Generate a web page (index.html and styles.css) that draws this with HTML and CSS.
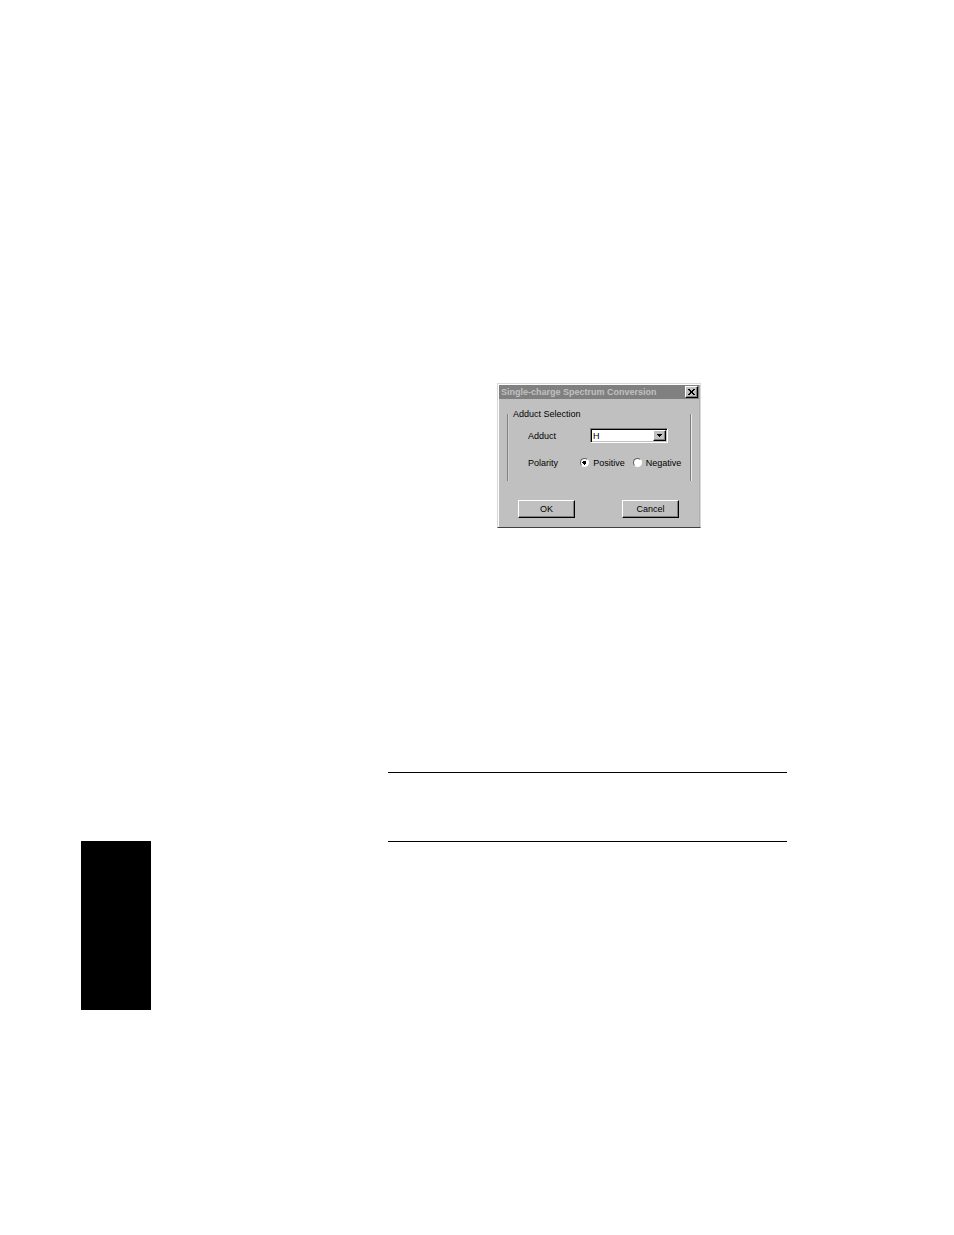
FILE: index.html
```
<!DOCTYPE html>
<html lang="en">
<head>
    <meta charset="UTF-8">
    <meta name="viewport" content="width=device-width, initial-scale=1.0">
    <title>Single-charge Spectrum Conversion</title>
    <link rel="stylesheet" href="styles.css">
</head>
<body>
    <div class="page">
        <aside class="chapter-tab"></aside>
        <main class="content">
            <form class="dialog">
                <header class="title-bar">
                    <h1>Single-charge Spectrum Conversion</h1>
                    <button type="button" class="close-btn" aria-label="Close">
                        <svg width="7" height="6" viewBox="0 0 7 6" shape-rendering="crispEdges">
                            <path d="M0 0h2v1h1v1h1v-1h1v-1h2v1h-1v1h-1v2h1v1h1v1h-2v-1h-1v-1h-1v1h-1v1h-2v-1h1v-1h1v-2h-1v-1h-1z"/>
                        </svg>
                    </button>
                </header>
                <fieldset class="group">
                    <legend>Adduct Selection</legend>
                    <div class="row">
                        <label class="name" for="adduct">Adduct</label>
                        <div class="combo">
                            <select id="adduct">
                                <option>H</option>
                            </select>
                            <span class="combo-arrow">
                                <svg width="5" height="3" viewBox="0 0 5 3" shape-rendering="crispEdges">
                                    <path d="M0 0h5v1h-1v1h-1v1h-1v-1h-1v-1h-1z"/>
                                </svg>
                            </span>
                        </div>
                    </div>
                    <div class="row" role="radiogroup" aria-label="Polarity">
                        <span class="name">Polarity</span>
                        <label class="option"><input type="radio" name="polarity" checked>Positive</label>
                        <label class="option"><input type="radio" name="polarity">Negative</label>
                    </div>
                </fieldset>
                <div class="buttons">
                    <button type="button" class="btn">OK</button>
                    <button type="button" class="btn">Cancel</button>
                </div>
            </form>
            <section class="note"></section>
        </main>
    </div>
</body>
</html>
```
FILE: styles.css
```
* {
    box-sizing: border-box;
}
body {
    margin: 0;
    background: #fff;
    color: #000;
    font-family: "Liberation Sans", Arial, sans-serif;
    font-size: 9px;
    line-height: 12px;
}
.page {
    display: grid;
    grid-template-columns: 70px 1fr;
    column-gap: 237px;
    align-items: start;
    min-height: 100vh;
    padding: 0 167px 0 81px;
}
.chapter-tab {
    height: 169px;
    margin-top: 841px;
    background: #000;
}
.content {
    padding-top: 383px;
}

/* dialog window */
.dialog {
    width: 204px;
    margin-left: 109px;
    padding: 1px 1px 9px;
    background: #c0c0c0;
    border: 1px solid #d8d8d8;
    border-bottom-color: #404040;
    box-shadow: inset 1px 1px #fff, inset -1px 0 #b0b0b0;
}
.title-bar {
    display: flex;
    align-items: center;
    justify-content: space-between;
    height: 14px;
    padding: 0 1px 0 2px;
    background: #808080;
}
.title-bar h1 {
    margin: 0;
    color: #c0c0c0;
    font-size: 9px;
    white-space: nowrap;
}
button {
    display: flex;
    align-items: center;
    justify-content: center;
    padding: 0;
    background: #c0c0c0;
    border: 1px solid;
    border-color: #fff #000 #000 #fff;
    box-shadow: inset -1px -1px #808080;
    color: #000;
    font: inherit;
}
.close-btn {
    width: 13px;
    height: 12px;
}

/* only the sides of the group frame are drawn */
.group {
    min-width: 0;
    height: 73px;
    margin: 9px 8px 0;
    padding: 0 5px;
    border: solid #808080;
    border-width: 0 1px;
    box-shadow: inset 1px 0 #d0d0d0, 1px 0 #e8e8e8;
}
.group legend {
    padding: 0;
}
.row {
    display: flex;
    align-items: center;
    height: 15px;
    margin: 8px 0 12px 15px;
}
.name {
    width: 53px;
}
.combo {
    position: relative;
    width: 78px;
    margin-left: 9px;
}
.combo select {
    display: block;
    width: 100%;
    height: 15px;
    padding: 0 14px 0 2px;
    appearance: none;
    background: #fff;
    border: 1px solid;
    border-color: #808080 #fff #fff #808080;
    border-radius: 0;
    box-shadow: inset 1px 1px #000, inset -1px -1px #c0c0c0;
    color: #000;
    font: inherit;
}
.combo-arrow {
    position: absolute;
    top: 2px;
    right: 2px;
    display: flex;
    align-items: center;
    justify-content: center;
    width: 13px;
    height: 11px;
    background: #c0c0c0;
    border: 1px solid;
    border-color: #fff #000 #000 #fff;
    box-shadow: inset -1px -1px #808080;
    pointer-events: none;
}
.option {
    display: flex;
    align-items: center;
    gap: 4px;
    width: 53px;
    white-space: nowrap;
}
.option input {
    flex: none;
    width: 9px;
    height: 9px;
    margin: 0;
    appearance: none;
    background: #fff;
    border: 1px solid;
    border-color: #606060 #fff #fff #606060;
    border-radius: 50%;
}
.option input:checked {
    background: radial-gradient(circle, #000 0 2px, #fff 2px);
}
.buttons {
    display: flex;
    justify-content: space-between;
    margin: 19px 20px 0 19px;
}
.btn {
    width: 57px;
    height: 18px;
}

/* ruled note */
.note {
    height: 70px;
    margin-top: 244px;
    border: solid #000;
    border-width: 1px 0;
}
```
